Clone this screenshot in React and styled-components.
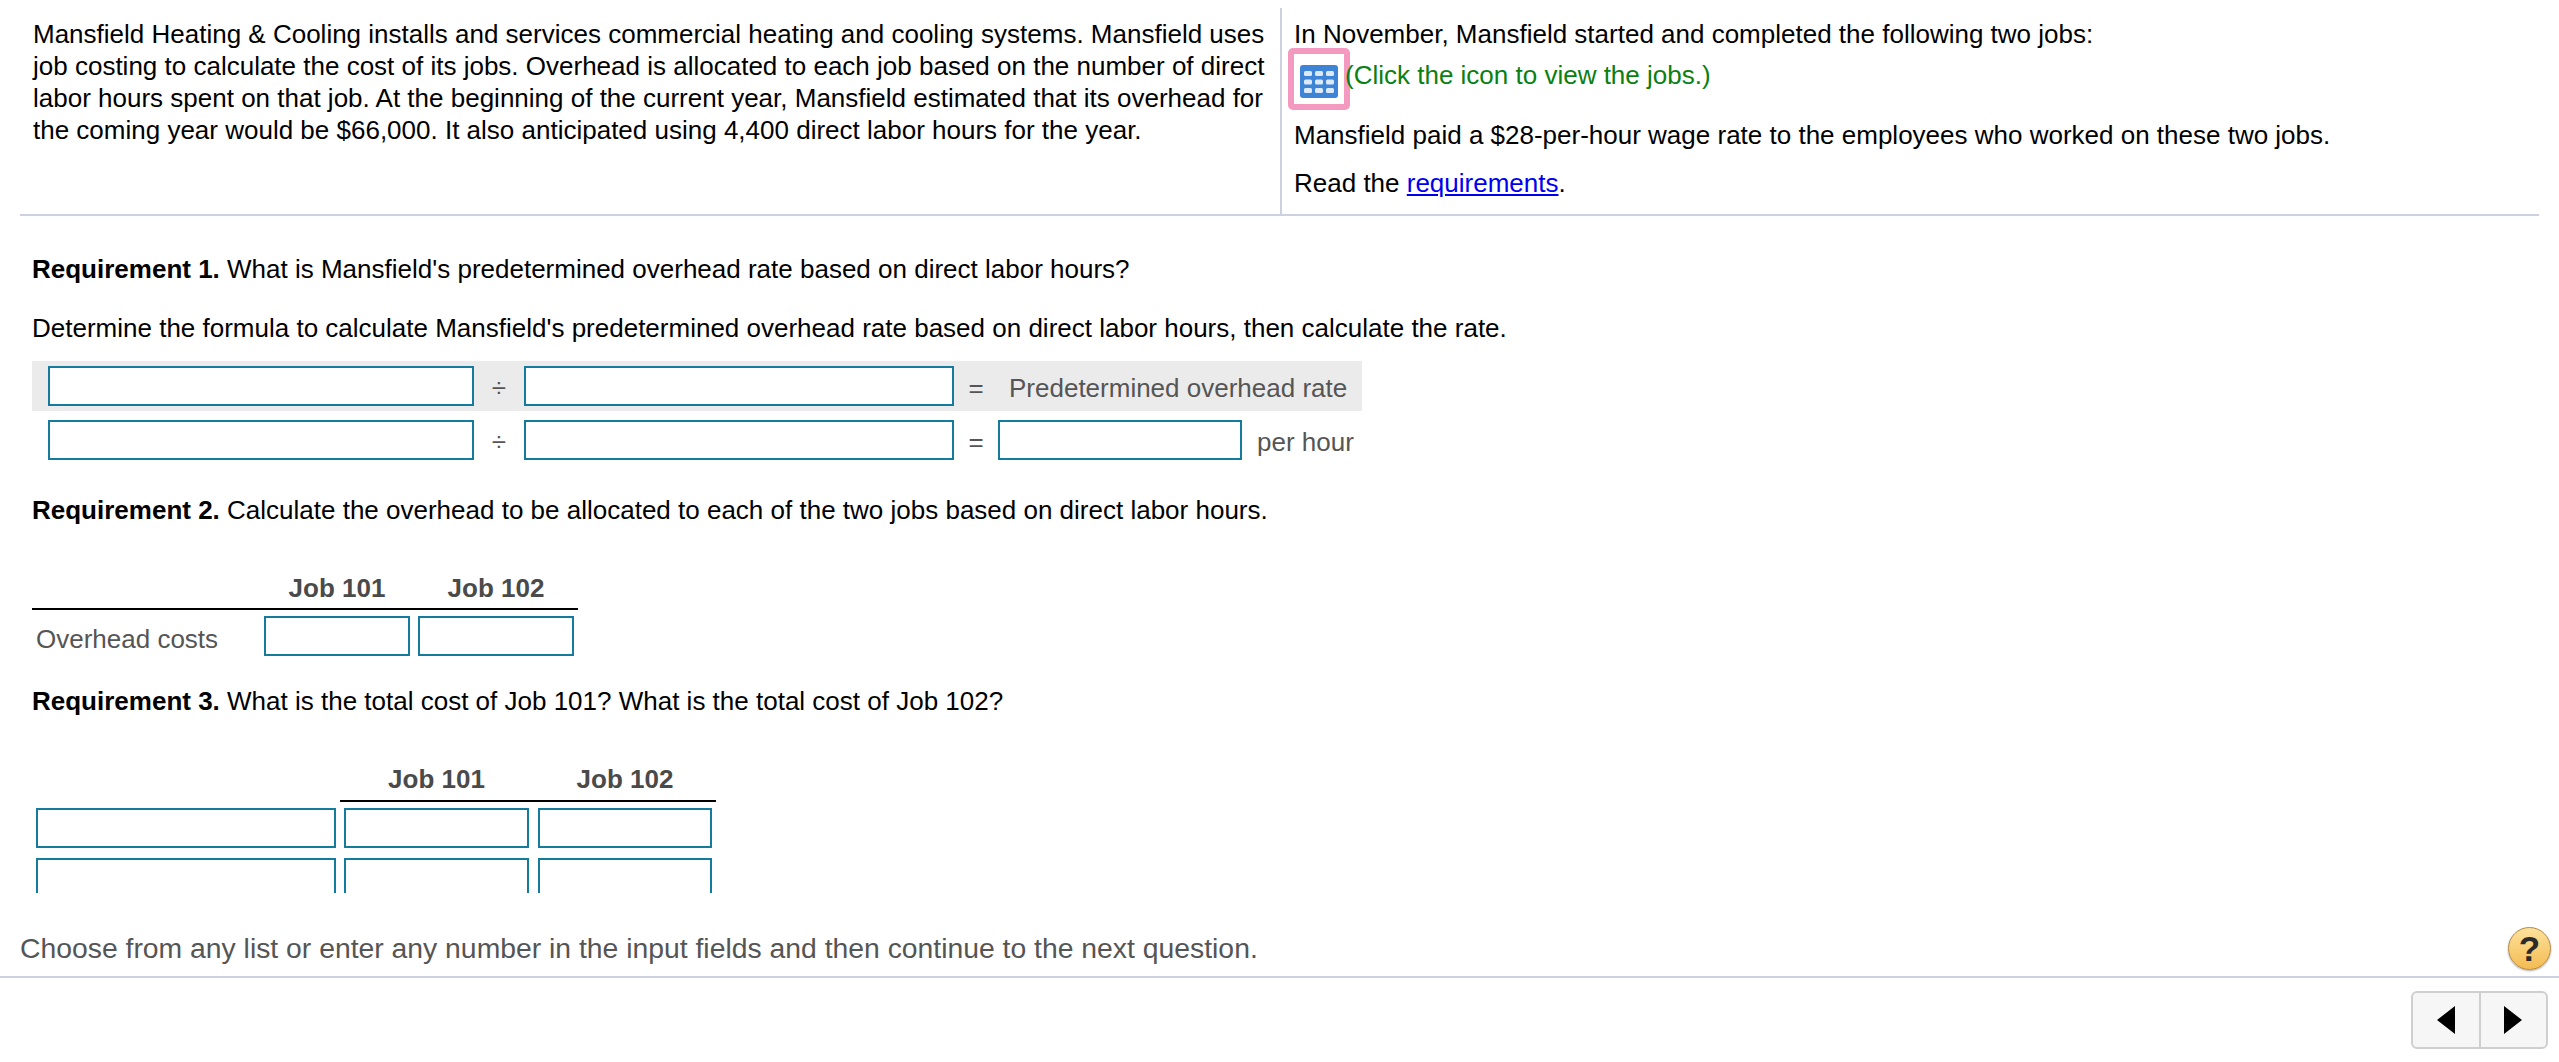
import React from "react"
import styled, { createGlobalStyle } from "styled-components"

const GlobalStyle = createGlobalStyle`
    html, body {
        margin: 0;
        padding: 0;
        background: #fff;
    }
    body {
        font-family: "Liberation Sans", Arial, sans-serif;
        font-size: 26px;
        color: #000;
        overflow: hidden;
    }
`

const Page = styled.div`
    width: 2559px;
    height: 1062px;
    display: flex;
    flex-direction: column;
`

const Question = styled.div`
    height: 893px;
    overflow: hidden;
`

const Top = styled.div`
    display: flex;
    height: 206px;
    margin: 8px 20px 0;
    border-bottom: 2px solid #cdd0de;
`

const LeftCell = styled.div`
    width: 1262px;
    box-sizing: border-box;
    padding: 10px 8px 0 13px;
    line-height: 32px;
    border-right: 2px solid #cdd0de;
`

const RightCell = styled.div`
    flex: 1;
    padding: 10px 0 0 12px;
    line-height: 32px;
`

const JobsRow = styled.div`
    display: flex;
    align-items: flex-start;
    height: 62px;
    margin: -2px 0 0 -6px;
`

const IconBox = styled.div`
    width: 62px;
    height: 62px;
    box-sizing: border-box;
    border: 6px solid #f49ac1;
    border-radius: 5px;
    display: flex;
    align-items: center;
    justify-content: center;
    padding-top: 4px;
`

const Green = styled.span`
    color: #0a8012;
    margin-left: -5px;
    margin-top: 11px;
`

const Para = styled.div`
    margin-top: ${props => props.$top || 0}px;
`

const Link = styled.a`
    color: #0000ee;
    text-decoration: underline;
`

const Body = styled.div`
    padding: 0 32px;
`

const Prompt = styled.div`
    line-height: 32px;
    margin-top: ${props => props.$top}px;
`

const FormulaRow = styled.div`
    display: flex;
    align-items: center;
    width: 1330px;
    height: ${props => props.$height}px;
    margin-top: ${props => props.$top}px;
    background: ${props => props.$shaded ? "#ebebeb" : "transparent"};
    color: #555;
`

const Field = styled.div`
    box-sizing: border-box;
    width: ${props => props.$width}px;
    height: 40px;
    flex: none;
    background: #fff;
    border: 2px solid #147b9c;
    margin-left: ${props => props.$left || 0}px;
`

const Operator = styled.span`
    width: ${props => props.$width}px;
    flex: none;
    text-align: center;
    padding-top: 4px;
    color: #555;
`

const Tail = styled.span`
    margin-left: ${props => props.$left}px;
    padding-top: 4px;
    white-space: nowrap;
`

const HeadRow = styled.div`
    display: flex;
    width: ${props => props.$width}px;
    margin-left: ${props => props.$left}px;
    margin-top: ${props => props.$top}px;
    border-bottom: 2px solid #000;
    height: ${props => props.$height}px;
`

const HeadCell = styled.div`
    width: ${props => props.$width}px;
    margin-left: ${props => props.$left || 0}px;
    flex: none;
    text-align: center;
    font-weight: bold;
    color: #4a4a4a;
    line-height: 32px;
`

const CostRow = styled.div`
    display: flex;
    align-items: center;
    margin-top: 6px;
    color: #555;
`

const RowLabel = styled.span`
    width: 228px;
    padding-left: 4px;
    margin-top: 6px;
    flex: none;
`

const InputRow = styled.div`
    display: flex;
    margin: ${props => props.$top}px 0 0 4px;
`

const Footer = styled.div`
    height: 85px;
    box-sizing: border-box;
    padding: 39px 8px 0 20px;
    display: flex;
    justify-content: space-between;
    align-items: flex-start;
    border-bottom: 2px solid #cdd0de;
`

const Hint = styled.div`
    font-size: 28.33px;
    line-height: 32px;
    color: #555;
`

const Help = styled.div`
    width: 43px;
    height: 43px;
    box-sizing: border-box;
    margin-top: -5px;
    border-radius: 50%;
    border: 1px solid #b48a3c;
    background: linear-gradient(#fee29c, #f3bb52);
    box-shadow: 0 1px 2px rgba(0, 0, 0, 0.35);
    color: #2b2b2b;
    font-size: 35px;
    font-weight: bold;
    line-height: 41px;
    text-align: center;
`

const NavBar = styled.div`
    display: flex;
    justify-content: flex-end;
    padding: 13px 11px 0 0;
`

const NavGroup = styled.div`
    display: flex;
    width: 137px;
    height: 58px;
    box-sizing: border-box;
    border: 2px solid #cfcfcf;
    border-radius: 6px;
    background: #f6f6f6;
`

const NavButton = styled.div`
    flex: 1;
    display: flex;
    align-items: center;
    justify-content: center;
    & + & {
        border-left: 2px solid #cfcfcf;
    }
`

function TableIcon() {
    const cells = []
    for (let r = 0; r < 3; r++) {
        for (let c = 0; c < 3; c++) {
            cells.push(<rect key={`${r}-${c}`} x={4 + c * 11} y={6 + r * 8.5} width="8" height="5" rx="1.5" fill="#dbe9f9" />)
        }
    }
    return (
        <svg width="38" height="33" viewBox="0 0 38 33">
            <rect width="38" height="33" rx="3" fill="#3d84d6" />
            {cells}
        </svg>
    )
}

function Triangle({ flip }) {
    return (
        <svg width="18" height="28" viewBox="0 0 18 28">
            <polygon points={flip ? "18,0 18,28 0,14" : "0,0 0,28 18,14"} fill="#000" />
        </svg>
    )
}

export default function App() {
    return (
        <Page>
            <GlobalStyle />
            <Question>
                <Top>
                    <LeftCell>
                        Mansfield Heating &amp; Cooling installs and services commercial heating and cooling systems. Mansfield uses job costing to calculate the cost of its jobs. Overhead is allocated to each job based on the number of direct labor hours spent on that job. At the beginning of the current year, Mansfield estimated that its overhead for the coming year would be $66,000. It also anticipated using 4,400 direct labor hours for the year.
                    </LeftCell>
                    <RightCell>
                        <div>In November, Mansfield started and completed the following two jobs:</div>
                        <JobsRow>
                            <IconBox><TableIcon /></IconBox>
                            <Green>(Click the icon to view the jobs.)</Green>
                        </JobsRow>
                        <Para $top={9}>Mansfield paid a $28-per-hour wage rate to the employees who worked on these two jobs.</Para>
                        <Para $top={16}>Read the <Link>requirements</Link>.</Para>
                    </RightCell>
                </Top>
                <Body>
                    <Prompt $top={37}><b>Requirement 1.</b> What is Mansfield's predetermined overhead rate based on direct labor hours?</Prompt>
                    <Prompt $top={27}>Determine the formula to calculate Mansfield's predetermined overhead rate based on direct labor hours, then calculate the rate.</Prompt>
                    <FormulaRow $shaded $height={50} $top={17}>
                        <Field $width={426} $left={16} />
                        <Operator $width={50}>÷</Operator>
                        <Field $width={430} />
                        <Operator $width={44}>=</Operator>
                        <Tail $left={11}>Predetermined overhead rate</Tail>
                    </FormulaRow>
                    <FormulaRow $height={40} $top={9}>
                        <Field $width={426} $left={16} />
                        <Operator $width={50}>÷</Operator>
                        <Field $width={430} />
                        <Operator $width={44}>=</Operator>
                        <Field $width={244} />
                        <Tail $left={15}>per hour</Tail>
                    </FormulaRow>
                    <Prompt $top={34}><b>Requirement 2.</b> Calculate the overhead to be allocated to each of the two jobs based on direct labor hours.</Prompt>
                    <HeadRow $width={546} $left={0} $top={46} $height={36}>
                        <HeadCell $width={146} $left={232}>Job 101</HeadCell>
                        <HeadCell $width={156} $left={8}>Job 102</HeadCell>
                    </HeadRow>
                    <CostRow>
                        <RowLabel>Overhead costs</RowLabel>
                        <Field $width={146} />
                        <Field $width={156} $left={8} />
                    </CostRow>
                    <Prompt $top={29}><b>Requirement 3.</b> What is the total cost of Job 101? What is the total cost of Job 102?</Prompt>
                    <HeadRow $width={376} $left={308} $top={46} $height={37}>
                        <HeadCell $width={185} $left={4}>Job 101</HeadCell>
                        <HeadCell $width={174} $left={9}>Job 102</HeadCell>
                    </HeadRow>
                    <InputRow $top={6}>
                        <Field $width={300} />
                        <Field $width={185} $left={8} />
                        <Field $width={174} $left={9} />
                    </InputRow>
                    <InputRow $top={10}>
                        <Field $width={300} />
                        <Field $width={185} $left={8} />
                        <Field $width={174} $left={9} />
                    </InputRow>
                </Body>
            </Question>
            <Footer>
                <Hint>Choose from any list or enter any number in the input fields and then continue to the next question.</Hint>
                <Help>?</Help>
            </Footer>
            <NavBar>
                <NavGroup>
                    <NavButton><Triangle flip /></NavButton>
                    <NavButton><Triangle /></NavButton>
                </NavGroup>
            </NavBar>
        </Page>
    )
}
